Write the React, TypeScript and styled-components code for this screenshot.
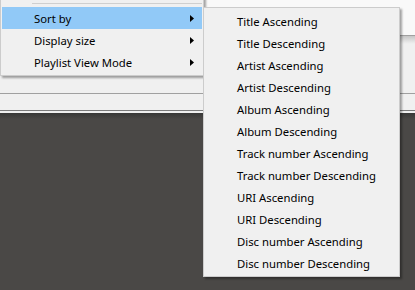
import styled, { createGlobalStyle } from "styled-components";

const GlobalStyle = createGlobalStyle`
  html, body {
    margin: 0;
    padding: 0;
    width: 415px;
    height: 290px;
    overflow: hidden;
    background: #4a4846;
  }
  #root {
    width: 415px;
    height: 290px;
  }
`;

const Window = styled.div`
  position: relative;
  display: flex;
  flex-direction: column;
  width: 415px;
  height: 290px;
  overflow: hidden;
  font-family: "Noto Sans", "Open Sans", sans-serif;
`;

const TopPane = styled.div`
  height: 35px;
  background: #f9f9f9;
  border-bottom: 1px solid #a0a0a0;
`;

const ListPane = styled.div`
  height: 57px;
  background: linear-gradient(#c6c6c6, #ececec 7px, #f0f0f0 8px);
  border-bottom: 1px solid #a0a0a0;
`;

const StatusPane = styled.div`
  height: 16px;
  background: #f0f0f0;
  border-bottom: 1px solid #7c7c7c;
`;

const Gap = styled.div`
  height: 2px;
  background: #f0f0f0;
`;

const DarkArea = styled.div`
  flex: 1;
  background: linear-gradient(#383837, #4a4846 6px);
`;

const Menu = styled.div<{ $left: number; $top: number; $width: number }>`
  position: absolute;
  left: ${(p) => p.$left}px;
  top: ${(p) => p.$top}px;
  width: ${(p) => p.$width}px;
  box-sizing: border-box;
  display: flex;
  flex-direction: column;
  padding: 2px 1px;
  background: #f0f0f0;
  border: 1px solid #cccccc;
  box-shadow: 2px 2px 2px rgba(0, 0, 0, 0.35);
`;

const Separator = styled.div`
  height: 8px;
  display: flex;
  align-items: center;
  padding-left: 30px;
  &::after {
    content: "";
    flex: 1;
    height: 1px;
    background: #cfcfcf;
  }
`;

const Item = styled.div<{ $active?: boolean }>`
  display: flex;
  align-items: center;
  height: 22px;
  padding: 0 8px 0 32px;
  font-size: 11.3px;
  color: #000;
  white-space: nowrap;
  background: ${(p) => (p.$active ? "#91c9f7" : "transparent")};
`;

const Label = styled.span`
  flex: 1;
`;

const Arrow = () => (
  <svg width="4" height="7" viewBox="0 0 4 7">
    <polygon points="0,0 4,3.5 0,7" fill="#000" />
  </svg>
);

const sortOptions = [
  "Title Ascending",
  "Title Descending",
  "Artist Ascending",
  "Artist Descending",
  "Album Ascending",
  "Album Descending",
  "Track number Ascending",
  "Track number Descending",
  "URI Ascending",
  "URI Descending",
  "Disc number Ascending",
  "Disc number Descending",
];

const App = () => {
  return (
    <>
      <GlobalStyle />
      <Window>
        <TopPane />
        <ListPane />
        <StatusPane />
        <Gap />
        <DarkArea />

        <Menu $left={0} $top={-4} $width={204}>
          <Separator />
          <Item $active>
            <Label>Sort by</Label>
            <Arrow />
          </Item>
          <Item>
            <Label>Display size</Label>
            <Arrow />
          </Item>
          <Item>
            <Label>Playlist View Mode</Label>
            <Arrow />
          </Item>
        </Menu>

        <Menu $left={203} $top={7} $width={197}>
          {sortOptions.map((option) => (
            <Item key={option}>
              <Label>{option}</Label>
            </Item>
          ))}
        </Menu>
      </Window>
    </>
  );
};

export default App;
